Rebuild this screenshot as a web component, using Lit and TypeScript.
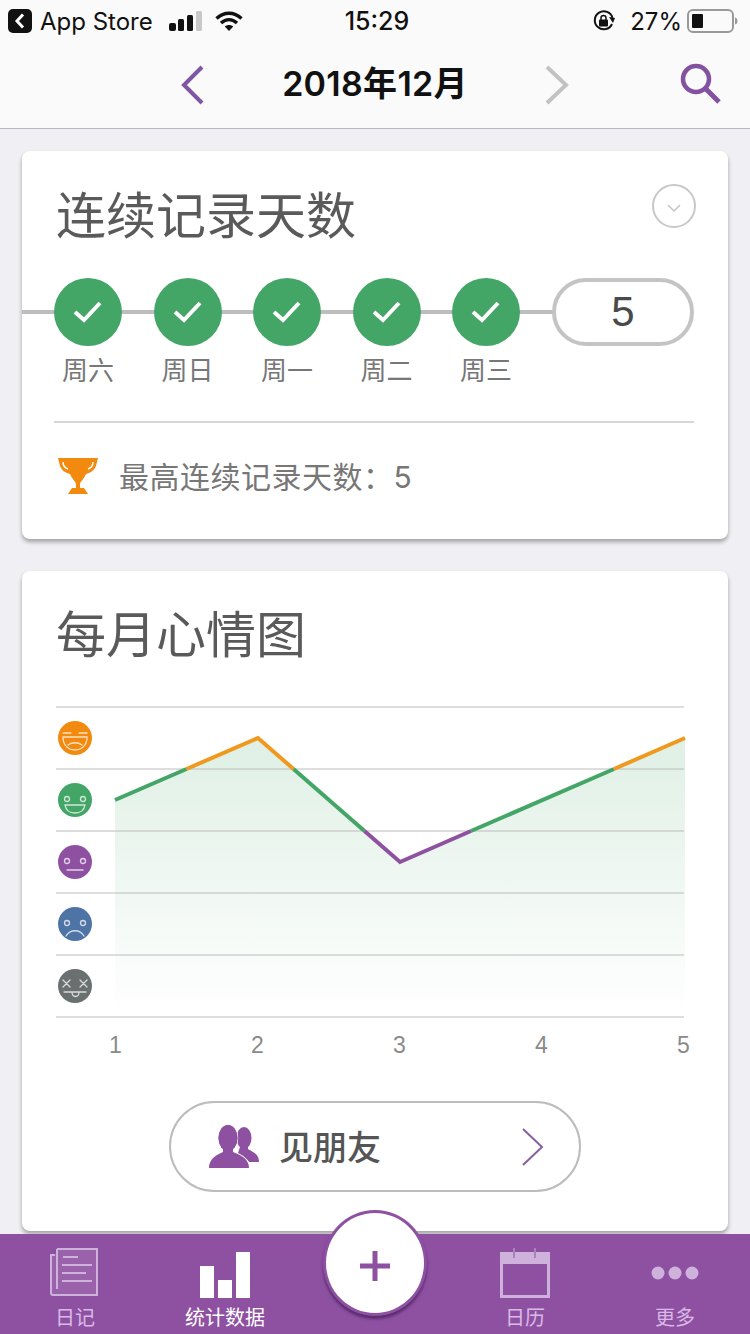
import { LitElement, html, css, svg } from "lit";
import { customElement } from "lit/decorators.js";

const FONT = css`"Inter", "Liberation Sans", "Noto Sans CJK SC", sans-serif`;
const days = ["周六", "周日", "周一", "周二", "周三"];

const face = (cy: number, color: string, inner: unknown) => svg`
  <circle cx="75" cy=${cy} r="17" fill=${color}></circle>
  <g transform="translate(75 ${cy})" fill="none" stroke="#fff" stroke-opacity=".75" stroke-width="1.300" stroke-linecap="round">${inner}</g>`;

const eyes = svg`<circle cx="-8" cy="-1" r="2.500"></circle><circle cx="8" cy="-1" r="2.500"></circle>`;

const segs: [string, string][] = [
  ["115,800 186.5,769", "#43a566"],
  ["186.5,769 258,738 293.5,769", "#ef9a1e"],
  ["293.5,769 364.5,831", "#43a566"],
  ["364.5,831 400,862 471,831", "#8e51a2"],
  ["471,831 614,769", "#43a566"],
  ["614,769 685,738", "#ef9a1e"],
];

@customElement("app-root")
export class AppRoot extends LitElement {
  static styles = css`
    :host {
      display: flex;
      flex-direction: column;
      position: relative;
      width: 750px;
      height: 1334px;
      overflow: hidden;
      background: #efeff4;
      font-family: ${FONT};
      color: #555;
    }
    svg { display: block; }
    .top { background: #fafafa; border-bottom: 1px solid #b9b7c4; height: 128px; flex: none; }
    .status {
      height: 42px;
      display: grid;
      grid-template-columns: 1fr auto 1fr;
      align-items: center;
      font-size: 24px;
      color: #111;
    }
    .s-left, .s-right { display: flex; align-items: center; }
    .s-left { padding-left: 8px; }
    .s-right { justify-content: flex-end; padding-right: 11px; }
    .app { margin-left: 8px; margin-right: 16px; }
    .wifi { margin-left: 13px; }
    .time { font-size: 25px; font-weight: 500; margin-left: 4px; }
    .pct { margin: 0 5px 0 14px; }
    .nav {
      height: 86px;
      display: grid;
      grid-template-columns: 170px 46px 318px 46px 170px;
      align-items: center;
      justify-items: center;
    }
    .title { font-size: 34px; font-weight: 600; color: #111; white-space: nowrap; margin-bottom: 7px; letter-spacing: 0.3px; }
    .search { justify-self: end; margin-right: 28px; margin-bottom: 2px; }
    .card {
      background: #fff;
      margin: 0 22px;
      border-radius: 8px;
      box-shadow: 0 3px 4px rgba(0, 0, 0, .32);
      flex: none;
    }
    .c1 { margin-top: 22px; height: 388px; padding: 32px 34px 0 32px; box-sizing: border-box; }
    .c2 { margin-top: 32px; height: 660px; }
    .head { display: flex; justify-content: space-between; align-items: flex-start; }
    h2 { margin: 0; font-size: 50px; font-weight: 400; line-height: 66px; color: #5a5a5a; }
    .c1 h2 { margin-left: 2px; }
    .c2 h2 { padding: 31px 0 0 34px; }
    .more { width: 44px; height: 44px; margin-top: 1px; margin-right: -2px; }
    .track {
      display: flex;
      align-items: flex-start;
      justify-content: space-between;
      margin-top: 29px;
      margin-left: -32px;
      padding-left: 32px;
      background: linear-gradient(#bdbdbd, #bdbdbd) 0 32px / 540px 4px no-repeat;
    }
    .days { display: flex; gap: 31.5px; }
    .day { width: 68px; display: flex; flex-direction: column; align-items: center; }
    .dot {
      width: 68px; height: 68px; border-radius: 50%;
      background: #43a566;
      display: flex; align-items: center; justify-content: center;
    }
    .lbl { font-size: 26px; color: #777; line-height: 36px; margin-top: 7px; white-space: nowrap; }
    .pill {
      width: 142px; height: 68px; box-sizing: border-box;
      border: 4px solid #c4c4c4; border-radius: 34px; background: #fff;
      display: flex; align-items: center; justify-content: center;
      font-family: "Liberation Sans", sans-serif;
      font-size: 42px; color: #4a4a4a;
    }
    .rule { height: 2px; background: #d6d6d6; margin-top: 32px; }
    .best { display: flex; align-items: center; gap: 20px; margin-top: 32px; padding-left: 4px; }
    .best span { font-size: 30px; color: #777; white-space: nowrap; letter-spacing: 0.5px; margin-top: -2px; }
    .chart { margin-top: 32px; }
    .axis { font-family: "Liberation Sans", sans-serif; font-size: 23px; fill: #8a8a8a; text-anchor: middle; }
    .friends {
      width: 412px; height: 91px; box-sizing: border-box;
      margin: 41px 0 0 147px;
      border: 2px solid #bcbcbc; border-radius: 46px;
      display: flex; align-items: center;
      padding-left: 37px;
      padding-right: 35px;
    }
    .friends span { font-size: 34px; font-weight: 500; color: #555; margin: -2px 0 0 19px; flex: 1; }
    .tabs {
      position: absolute; left: 0; right: 0; bottom: 0; height: 100px;
      background: #8e51a2;
      display: grid; grid-template-columns: repeat(5, 150px);
    }
    .tab {
      display: flex; flex-direction: column; align-items: center;
      font-size: 20px; color: #d9b9e6;
    }
    .tab.on { color: #fff; }
    .ico { height: 68px; width: 100%; display: flex; justify-content: center; align-items: flex-start; padding-top: 14px; box-sizing: border-box; }
    .tab b { font-weight: 400; line-height: 30px; margin-top: 1px; }
    .fab {
      position: absolute; left: 323px; top: 1210px;
      width: 104px; height: 106px; box-sizing: border-box;
      border-radius: 50%; background: #fff;
      border: 3px solid #8e51a2;
      box-shadow: 0 3px 3px rgba(70, 30, 90, .75);
      display: flex; align-items: center; justify-content: center;
    }
    .plus { margin-top: 6px; }
  `;

  render() {
    return html`
      <div class="top">
        <div class="status">
          <div class="s-left">
            <svg width="24" height="24" viewBox="0 0 24 24"><rect width="24" height="24" rx="5" fill="#111"></rect><path d="M15 5.500 9 12l6 6.500" fill="none" stroke="#fff" stroke-width="3"></path></svg>
            <span class="app">App Store</span>
            <svg width="33" height="20" viewBox="0 0 33 20"><rect x="0" y="12" width="7" height="8" rx="2" fill="#111"></rect><rect x="9" y="8" width="6" height="12" rx="1.500" fill="#111"></rect><rect x="18" y="4" width="6" height="16" rx="1.500" fill="#111"></rect><rect x="27" y="0" width="6" height="20" rx="1.500" fill="#c8c8c8"></rect></svg>
            <svg class="wifi" width="28" height="20" viewBox="0 0 28 20"><path d="M1.500 7.500C9 .5 19 .5 26.500 7.500M6 12c5-4.500 11-4.500 16 0" fill="none" stroke="#111" stroke-width="3.400"></path><path d="M9.800 15.500c2.500-2 6-2 8.400 0L14 20z" fill="#111"></path></svg>
          </div>
          <div class="time">15:29</div>
          <div class="s-right">
            <svg width="24" height="24" viewBox="0 0 24 24"><path d="M20 15a9 9 0 1 1 .5-6" fill="none" stroke="#111" stroke-width="2"></path><path d="m17 8 6 1-2 5z" fill="#111"></path><rect x="7" y="10.500" width="9" height="7" rx="1" fill="#111"></rect><path d="M9 11V9a2.500 2.500 0 0 1 5 0v2" fill="none" stroke="#111" stroke-width="1.500"></path></svg>
            <span class="pct">27%</span>
            <svg width="52" height="24" viewBox="0 0 52 24"><rect x="1" y="1" width="45" height="22" rx="5" fill="none" stroke="#999" stroke-width="2"></rect><rect x="5" y="5" width="11" height="14" rx="1" fill="#111"></rect><path d="M48 8.500c2 .5 2.500 2 2.500 3.500s-.5 3-2.500 3.500z" fill="#999"></path></svg>
          </div>
        </div>
        <div class="nav">
          <span></span>
          <svg width="26" height="40" viewBox="0 0 26 40"><path d="M22 2 4 20l18 18" fill="none" stroke="#7f56a3" stroke-width="4"></path></svg>
          <div class="title">2018年12月</div>
          <svg width="26" height="40" viewBox="0 0 26 40"><path d="M3 2l19 18L3 38" fill="none" stroke="#c2c2c2" stroke-width="4"></path></svg>
          <svg class="search" width="42" height="42" viewBox="0 0 42 42"><circle cx="16" cy="16" r="13" fill="none" stroke="#8450a0" stroke-width="4.500"></circle><path d="m26 26 13 13" stroke="#8450a0" stroke-width="5" fill="none"></path></svg>
        </div>
      </div>

      <section class="card c1">
        <div class="head">
          <h2>连续记录天数</h2>
          <svg class="more" viewBox="0 0 44 44"><circle cx="22" cy="22" r="21" fill="none" stroke="#c8c8c8" stroke-width="2"></circle><path d="m16 21 6 6 6-6" fill="none" stroke="#c4c4c4" stroke-width="1.500"></path></svg>
        </div>
        <div class="track">
          <div class="days">
            ${days.map(
              (d) => html`<div class="day">
                <div class="dot"><svg width="30" height="24" viewBox="0 0 30 24"><path d="M2 12l9 8L27 3" fill="none" stroke="#fff" stroke-width="4"></path></svg></div>
                <div class="lbl">${d}</div>
              </div>`
            )}
          </div>
          <div class="pill">5</div>
        </div>
        <div class="rule"></div>
        <div class="best">
          <svg width="41" height="38" viewBox="58 458 41 38"><path d="M58 459H98L96 467C94 472 90 474 86 475 84 480 80 483 80 485V489H84L88 495H68L72 489H76V485C76 483 72 480 70 475 66 474 62 472 60 467Z" fill="#f28a0f"></path><path d="M63 463c0 3 2 6 5 7M93 463c0 3-2 6-5 7" fill="none" stroke="#fff" stroke-width="1.500"></path></svg>
          <span>最高连续记录天数：5</span>
        </div>
      </section>

      <section class="card c2">
        <h2>每月心情图</h2>
        <svg class="chart" width="706" height="360" viewBox="22 700 706 360">
          <defs>
            <linearGradient id="area" x1="0" y1="0" x2="0" y2="1">
              <stop offset="0" stop-color="#43a566" stop-opacity=".17"></stop>
              <stop offset="1" stop-color="#43a566" stop-opacity="0"></stop>
            </linearGradient>
          </defs>
          <path d="M115 800 258 738 400 862 543 800 685 738V1017H115Z" fill="url(#area)"></path>
          ${[707, 769, 831, 893, 955, 1017].map(
            (y) => svg`<line x1="56" x2="684" y1=${y} y2=${y} stroke="#bcbcbc" stroke-width="1"></line>`
          )}
          ${segs.map(
            ([p, c]) => svg`<polyline points=${p} fill="none" stroke=${c} stroke-width="4"></polyline>`
          )}
          ${face(738, "#f28a0f", svg`<path d="M-12-5h8M4-5h8M-12 -1H12C12 8 6 12 0 12S-12 8-12-1Z"></path><path d="M-7 7c4-3 10-3 14 0"></path>`)}
          ${face(800, "#43a566", svg`${eyes}<path d="M-10 5H10C9 11 5 13 0 13S-9 11-10 5Z"></path>`)}
          ${face(862, "#8e51a2", svg`${eyes}<path d="M-8 8H8"></path>`)}
          ${face(924, "#4e73a5", svg`${eyes}<path d="M-9 12C-5 5 5 5 9 12"></path>`)}
          ${face(986, "#6a6f70", svg`<path d="M-12-6-5 1M-5-6-12 1M5-6 12 1M12-6 5 1M-11 6H11M-3 6C-3 12 4 12 4 6"></path>`)}
          ${[1, 2, 3, 4, 5].map(
            (n, i) => svg`<text class="axis" x=${115.5 + i * 142} y="1053">${n}</text>`
          )}
        </svg>
        <div class="friends">
          <svg width="52" height="44" viewBox="208 1126 52 44"><ellipse cx="244" cy="1139" rx="7.500" ry="11" fill="#8e51a2"></ellipse><path d="M240 1148h8v2c5 3 11 5 11 13h-10c-2-4-8-7-11-9z" fill="#8e51a2"></path><g fill="#8e51a2" stroke="#fff" stroke-width="1.500" paint-order="stroke"><ellipse cx="228" cy="1139" rx="9.500" ry="13"></ellipse><path d="M209 1169C209 1160 216 1156 223 1153V1147H233V1153C241 1156 249 1160 249 1169Z"></path></g><ellipse cx="228" cy="1139" rx="9.500" ry="13" fill="#8e51a2"></ellipse></svg>
          <span>见朋友</span>
          <svg width="22" height="38" viewBox="0 0 22 38"><path d="M1 1l19 18L1 37" fill="none" stroke="#8860a0" stroke-width="2"></path></svg>
        </div>
      </section>

      <nav class="tabs">
        <div class="tab">
          <div class="ico">
            <svg style="margin-left:-2px" width="48" height="48" viewBox="0 0 48 48"><path d="M7 1h40v46H3a2 2 0 0 1-2-2V7h4" fill="rgba(255,255,255,.1)" stroke="#cfb2dc" stroke-width="2"></path><path d="M6 1h2v40H6z" fill="#cfb2dc"></path><path d="M13 9h15M12 17h30M12 25h24M12 33h30" stroke="#cfb2dc" stroke-width="2" fill="none"></path></svg>
          </div>
          <b>日记</b>
        </div>
        <div class="tab on">
          <div class="ico">
            <svg style="margin-top:4px" width="50" height="46" viewBox="0 0 50 46"><path d="M0 14h14v32H0zM18 28h14v18H18zM36 0h14v46H36z" fill="#fff"></path></svg>
          </div>
          <b>统计数据</b>
        </div>
        <div></div>
        <div class="tab">
          <div class="ico">
            <svg width="50" height="50" viewBox="0 0 50 50"><rect x="1.500" y="5.500" width="47" height="43" fill="none" stroke="#cfb2dc" stroke-width="3"></rect><rect x="0" y="4" width="50" height="12" fill="#cfb2dc"></rect><path d="M14 0v10M35 0v10" stroke="#a883ba" stroke-width="2"></path></svg>
          </div>
          <b>日历</b>
        </div>
        <div class="tab">
          <div class="ico">
            <svg style="margin-top:18px" width="48" height="14" viewBox="0 0 48 14"><circle cx="7" cy="7" r="6.500" fill="#cfb2dc"></circle><circle cx="24" cy="7" r="6.500" fill="#cfb2dc"></circle><circle cx="41" cy="7" r="6.500" fill="#cfb2dc"></circle></svg>
          </div>
          <b>更多</b>
        </div>
      </nav>
      <div class="fab">
        <svg class="plus" width="30" height="30" viewBox="0 0 30 30"><path d="M15 0v30M0 15h30" stroke="#8e51a2" stroke-width="5" fill="none"></path></svg>
      </div>
    `;
  }
}
